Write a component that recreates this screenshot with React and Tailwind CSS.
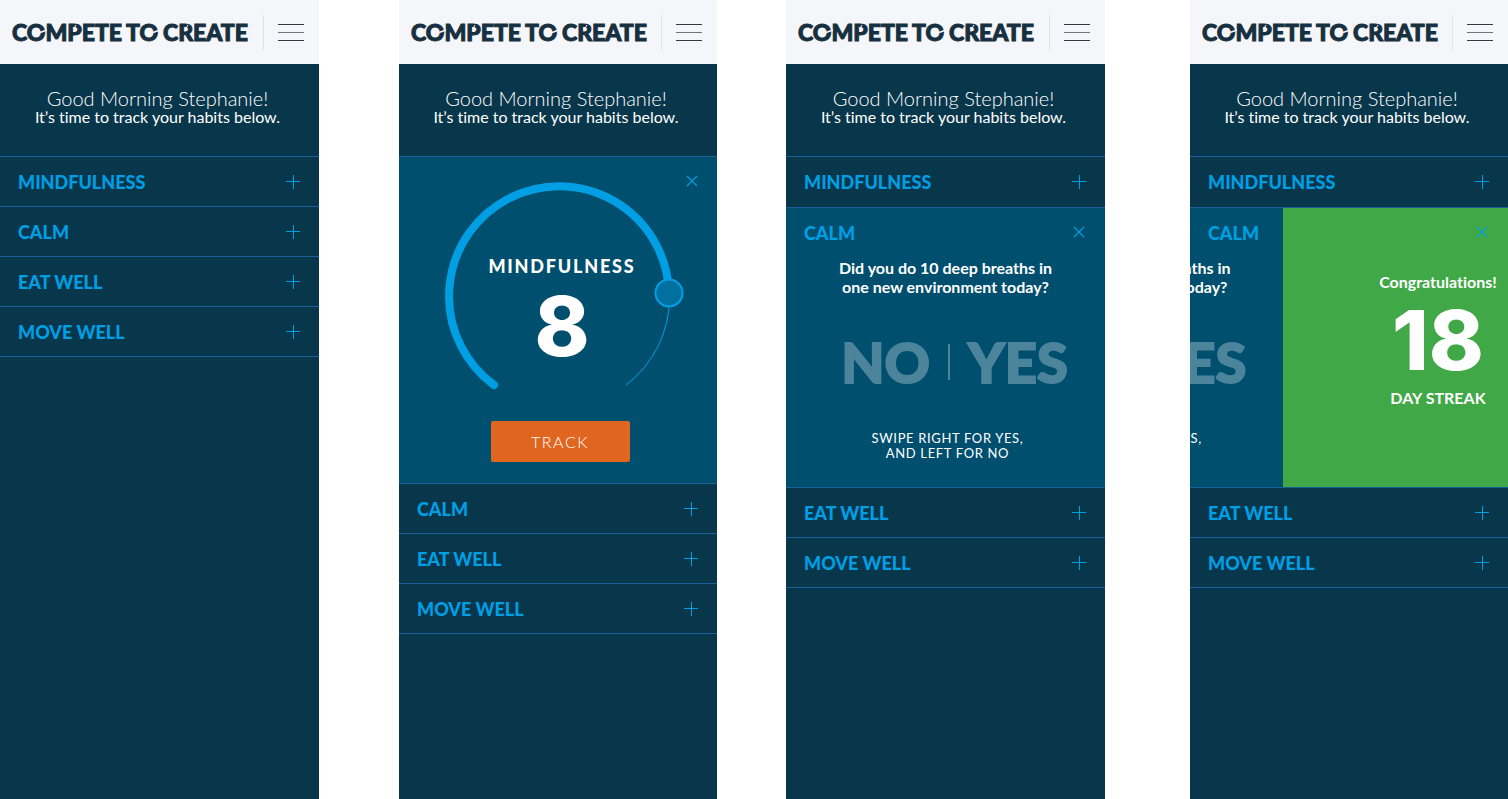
import React from "react";

const LATO = "font-['Lato','Open_Sans',sans-serif] [font-variant-ligatures:none]";
const HEAVY = "font-['Lato','Open_Sans',sans-serif] font-black";
const NUMERAL = "font-['Inter','Lato',sans-serif] text-[83px] font-extrabold";

function Logo() {
  return (
    <a href="#home" aria-label="Compete to Create" className="block">
      <svg
        width="238"
        height="32"
        viewBox="0 0 238 32"
        fill="#17303f"
        stroke="#17303f"
        strokeWidth="1"
        fontFamily="Lato, sans-serif"
        fontWeight="900"
        fontSize="23"
      >
        <text x="0" y="25">COMPETE</text>
        <text x="114" y="25">TO</text>
        <text x="151" y="25">CREATE</text>
        <g stroke="#f5f6fa" strokeWidth="1.5">
          <path d="M28 16.500L35 14" />
          <path d="M141 16.500L148 14" />
        </g>
        <g stroke="#f5f6fa" strokeWidth="1">
          <path d="M61.500 13L64 9" />
          <path d="M173.500 13L176 9" />
        </g>
      </svg>
    </a>
  );
}

function MenuButton() {
  return (
    <button type="button" aria-label="Open menu" className="flex w-[26px] flex-col gap-[7px]">
      <span className="h-px w-full bg-[#333a44]" />
      <span className="h-px w-full bg-[#70757d]" />
      <span className="h-px w-full bg-[#333a44]" />
    </button>
  );
}

function Plus() {
  return (
    <svg width="14" height="14" viewBox="0 0 14 14" stroke="#009fe3" fill="none" aria-hidden="true">
      <path d="M7.5 0V14M0 6.5H14" />
    </svg>
  );
}

function Cross() {
  return (
    <svg width="12" height="12" viewBox="0 0 12 12" stroke="#009fe3" strokeWidth="1.2" fill="none" aria-hidden="true">
      <path d="M1 1L11 11M11 1L1 11" />
    </svg>
  );
}

function HabitRow({ name }) {
  return (
    <button
      type="button"
      aria-expanded="false"
      className="flex h-[50px] w-full items-center justify-between border-t border-[#1b5f99] pr-[19px] pl-[18px] text-left"
    >
      <span className={`pt-px text-[18px] leading-6 text-[#009fe3] ${HEAVY}`}>{name}</span>
      <Plus />
    </button>
  );
}

function Phone({ className, children }) {
  return (
    <section className={`flex min-w-0 flex-col overflow-hidden bg-[#08364b] ${className}`}>
      <header className="flex h-16 items-center justify-between bg-[#f5f6fa] pl-3 pr-[15px]">
        <Logo />
        <div className="flex h-[35px] items-center border-l border-[#dfe1e6] pl-[14px]">
          <MenuButton />
        </div>
      </header>
      <div className="flex h-[92px] flex-col items-center pt-6 pr-1 text-white">
        <h1 className="text-[20px] leading-5 font-light">Good Morning Stephanie!</h1>
        <p className="text-base leading-[18px]">It’s time to track your habits below.</p>
      </div>
      <div className="border-b border-[#1b5f99]">{children}</div>
    </section>
  );
}

function DialPanel() {
  return (
    <div className="grid h-[327px] border-t border-[#1b5f99] bg-[#004f6e]">
      <div className="flex items-start justify-end pt-[18px] pr-[19px] [grid-area:1/1]">
        <button type="button" aria-label="Close mindfulness">
          <Cross />
        </button>
      </div>
      <div className="flex flex-col items-center pt-[23px] pl-1 [grid-area:1/1]">
        <label className="relative flex h-[220px] w-[240px] flex-col items-center pt-[74px] pl-1 text-white">
          <svg
            className="absolute inset-0 overflow-visible"
            width="240"
            height="220"
            viewBox="-3 0 240 220"
            fill="none"
            stroke="#009fe3"
            aria-hidden="true"
          >
            <path d="M226.500 118A110 110 0 0 1 183 205" strokeWidth="1" />
            <path d="M51 205A110 110 0 1 1 226 113" strokeWidth="8" strokeLinecap="round" />
            <circle cx="226" cy="113" r="13.500" fill="#00719f" strokeWidth="2" />
          </svg>
          <span className="text-[18px] leading-6 font-black tracking-widest">MINDFULNESS</span>
          <output className={`leading-[96px] ${NUMERAL}`}>8</output>
          <input
            type="range"
            min="0"
            max="10"
            defaultValue="8"
            className="absolute inset-0 h-full w-full cursor-pointer opacity-0"
          />
        </label>
        <button
          type="button"
          className="mt-[21px] h-[41px] w-[139px] rounded-xs bg-[#e0661f] text-base font-light tracking-widest text-white"
        >
          TRACK
        </button>
      </div>
    </div>
  );
}

function QuestionSlide() {
  return (
    <div className="flex w-full shrink-0 flex-col items-center pt-[50px] text-white">
      <p className="text-center text-base leading-[19px] font-bold">
        Did you do 10 deep breaths in
        <br />
        one new environment today?
      </p>
      <div className={`mt-[36px] flex h-[60px] items-center gap-[18px] pl-[18px] text-[56px] leading-[60px] text-[#4c849b] [-webkit-text-stroke:2px_#4c849b] ${HEAVY}`}>
        <button type="button">NO</button>
        <span className="h-9 w-0.5 bg-[#4c849b]" />
        <button type="button">YES</button>
      </div>
      <p className="mt-[39px] pl-1 text-center text-[13px] leading-[15px] tracking-wider">
        SWIPE RIGHT FOR YES,
        <br />
        AND LEFT FOR NO
      </p>
    </div>
  );
}

function StreakSlide() {
  return (
    <div className="flex w-full shrink-0 flex-col items-center bg-[#41a847] pt-16 pr-2 font-bold text-white">
      <p className="text-base leading-5">Congratulations!</p>
      <p className={`leading-[96px] ${NUMERAL}`}>18</p>
      <p className="text-base leading-5">DAY STREAK</p>
    </div>
  );
}

function CalmPanel({ answered }) {
  return (
    <div className="mt-px grid h-[280px] grid-cols-[minmax(0,1fr)] overflow-hidden border-t border-[#1b5f99] bg-[#004f6e]">
      <div className="flex overflow-hidden [grid-area:1/1]">
        <div className={`flex w-full shrink-0 ${answered ? "-translate-x-[225px]" : ""}`}>
          <QuestionSlide />
          {answered && <StreakSlide />}
        </div>
      </div>
      <div className="z-10 flex h-12 items-center justify-between self-start pl-[18px] pr-5 [grid-area:1/1]">
        <h2 className={`pt-px text-[18px] leading-6 text-[#009fe3] ${HEAVY}`}>CALM</h2>
        <button type="button" aria-label="Close calm">
          <Cross />
        </button>
      </div>
    </div>
  );
}

export default function App() {
  return (
    <main
      className={`grid min-h-screen grid-cols-[minmax(0,319fr)_80fr_minmax(0,318fr)_69fr_minmax(0,319fr)_85fr_minmax(0,318fr)] bg-white ${LATO}`}
    >
      <Phone className="col-start-1">
        <HabitRow name="MINDFULNESS" />
        <HabitRow name="CALM" />
        <HabitRow name="EAT WELL" />
        <HabitRow name="MOVE WELL" />
      </Phone>
      <Phone className="col-start-3">
        <DialPanel />
        <HabitRow name="CALM" />
        <HabitRow name="EAT WELL" />
        <HabitRow name="MOVE WELL" />
      </Phone>
      <Phone className="col-start-5">
        <HabitRow name="MINDFULNESS" />
        <CalmPanel />
        <HabitRow name="EAT WELL" />
        <HabitRow name="MOVE WELL" />
      </Phone>
      <Phone className="col-start-7">
        <HabitRow name="MINDFULNESS" />
        <CalmPanel answered />
        <HabitRow name="EAT WELL" />
        <HabitRow name="MOVE WELL" />
      </Phone>
    </main>
  );
}
